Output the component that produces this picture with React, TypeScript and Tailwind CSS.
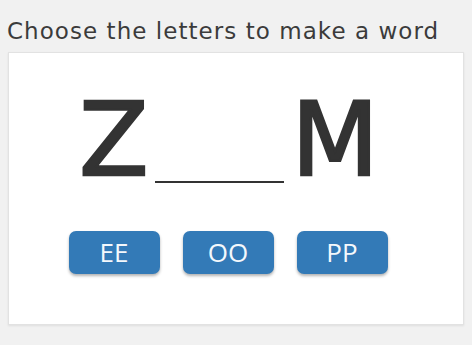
export default function App() {
  const choices = ["EE", "OO", "PP"];

  return (
    <div className="w-full h-[347px] bg-white">
      <div className="w-[472px] h-[345px] bg-[#f1f1f1] px-2 pt-[16px]">
        <h1 className="text-[23px] leading-[30px] text-[#3b3b3b] tracking-[1.05px] font-['DejaVu_Sans',sans-serif] ml-[-1px]">
          Choose the letters to make a word
        </h1>
        <div className="mt-[6px] h-[273px] bg-white border border-[#e2e2e2] shadow-[0_1px_2px_rgba(0,0,0,0.08)] flex flex-col items-center pr-[14px]">
          <div className="mt-[41px] flex items-end font-['DejaVu_Sans',sans-serif] text-[#333] text-[101px] leading-[92px] [-webkit-text-stroke:2.5px_#333]">
            <span>Z</span>
            <span className="ml-[6px] mr-[8px] mb-[3px] w-[129px] h-[2px] bg-[#333]" />
            <span>M</span>
          </div>
          <div className="mt-[45px] flex gap-[23px] mr-[2px]">
            {choices.map((c) => (
              <button
                key={c}
                type="button"
                className="w-[91px] h-[43px] rounded-[7px] bg-[#337ab7] text-[#f4f8fc] text-[26px] font-['Open_Sans',sans-serif] shadow-[0_2px_3px_rgba(0,0,0,0.3)] flex items-center justify-center"
              >
                {c}
              </button>
            ))}
          </div>
        </div>
      </div>
    </div>
  );
}
